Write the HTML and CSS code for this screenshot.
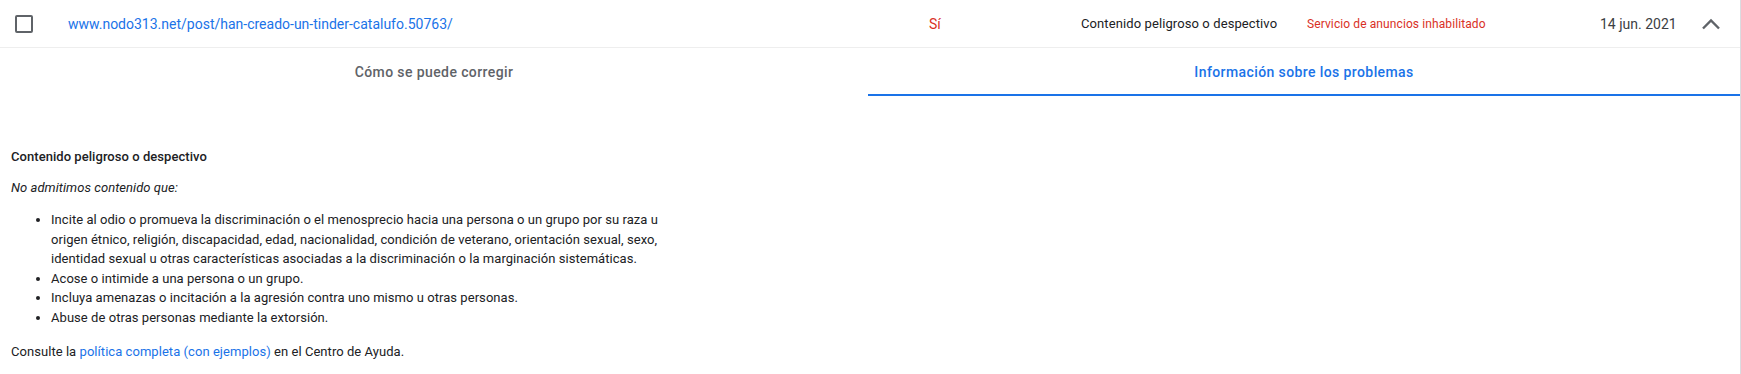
FILE: index.html
```html
<!DOCTYPE html>
<html lang="es">
<head>
<meta charset="utf-8">
<link rel="stylesheet" href="styles.css">
</head>
<body>
<div class="panel">
  <div class="row">
    <div class="cell cell-check"><span class="checkbox"></span></div>
    <div class="cell cell-url"><a class="url" href="#">www.nodo313.net/post/han-creado-un-tinder-catalufo.50763/</a></div>
    <div class="cell cell-yes">Sí</div>
    <div class="cell cell-issue">Contenido peligroso o despectivo</div>
    <div class="cell cell-status">Servicio de anuncios inhabilitado</div>
    <div class="cell cell-date">14 jun. 2021</div>
    <div class="cell cell-toggle">
      <svg class="chevron" viewBox="0 0 24 24" width="24" height="24"><path d="M4 16.5L12 8.5L20 16.5" fill="none" stroke="#5f6368" stroke-width="2.4"/></svg>
    </div>
  </div>
  <div class="tabs">
    <div class="tab">Cómo se puede corregir</div>
    <div class="tab tab-active">Información sobre los problemas</div>
  </div>
  <div class="content">
    <div class="content-title">Contenido peligroso o despectivo</div>
    <p class="intro">No admitimos contenido que:</p>
    <ul class="rules">
      <li>Incite al odio o promueva la discriminación o el menosprecio hacia una persona o un grupo por su raza u origen étnico, religión, discapacidad, edad, nacionalidad, condición de veterano, orientación sexual, sexo, identidad sexual u otras características asociadas a la discriminación o la marginación sistemáticas.</li>
      <li>Acose o intimide a una persona o un grupo.</li>
      <li>Incluya amenazas o incitación a la agresión contra uno mismo u otras personas.</li>
      <li>Abuse de otras personas mediante la extorsión.</li>
    </ul>
    <p class="more">Consulte la <a class="link" href="#">política completa (con ejemplos)</a> en el Centro de Ayuda.</p>
  </div>
</div>
</body>
</html>
```

FILE: styles.css
```css
html, body {
  margin: 0;
  padding: 0;
  background: #ffffff;
}
body {
  font-family: Roboto, "Liberation Sans", Arial, sans-serif;
  color: #202124;
}
.panel {
  width: 1740px;
  height: 374px;
  border-right: 1px solid #dadce0;
  box-sizing: content-box;
}
.row {
  display: grid;
  grid-template-columns: 68px 861px 152px 226px 293px 99px 41px;
  height: 47px;
  border-bottom: 1px solid #eeeeee;
  align-items: center;
}
.cell {
  font-size: 13px;
  white-space: nowrap;
}
.cell-check {
  padding-left: 15px;
  display: flex;
  align-items: center;
}
.checkbox {
  width: 18px;
  height: 18px;
  box-sizing: border-box;
  border: 2px solid #5f6368;
  border-radius: 2px;
}
.url {
  font-size: 14px;
  color: #1a73e8;
  text-decoration: none;
}
.cell-yes {
  color: #d93025;
  font-size: 14px;
}
.cell-issue {
  color: #202124;
  letter-spacing: 0.1px;
}
.cell-status {
  color: #d93025;
  font-size: 12px;
  letter-spacing: 0.1px;
}
.cell-date {
  font-size: 14px;
  color: #3c4043;
}
.cell-toggle {
  display: flex;
  align-items: center;
}
.chevron {
  display: block;
}
.tabs {
  display: grid;
  grid-template-columns: 868px 872px;
  height: 48px;
}
.tab {
  display: flex;
  align-items: center;
  justify-content: center;
  font-size: 14px;
  font-weight: 500;
  letter-spacing: 0.4px;
  color: #5f6368;
  box-sizing: border-box;
  border-bottom: 2px solid transparent;
  padding-top: 2px;
}
.tab-active {
  color: #1a73e8;
  border-bottom-color: #1a73e8;
}
.content {
  padding: 51px 11px 0;
  font-size: 13px;
  line-height: 20px;
  width: 670px;
  letter-spacing: 0.05px;
}
.content-title {
  font-weight: 500;
}
.intro {
  font-style: italic;
  margin: 11px 0 12px;
}
.rules {
  margin: 0;
  padding-left: 40px;
}
.rules li {
  line-height: 19.5px;
}
.more {
  margin: 15px 0 0;
}
.link {
  color: #1a73e8;
  text-decoration: none;
}
```
